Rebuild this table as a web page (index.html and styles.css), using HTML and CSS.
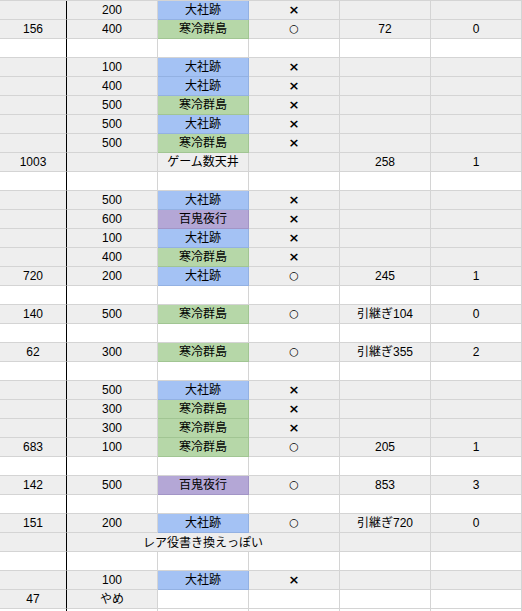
FILE: index.html
```html
<!DOCTYPE html>
<html lang="ja">
<head>
<meta charset="utf-8">
<title>sheet</title>
<link rel="stylesheet" href="styles.css">
</head>
<body>
<div class="sheet">
  <div class="c a">&nbsp;</div><div class="c">200</div><div class="c blue">大社跡</div><div class="c x">×</div><div class="c"></div><div class="c"></div>
  <div class="c a">156</div><div class="c">400</div><div class="c green">寒冷群島</div><div class="c o">○</div><div class="c">72</div><div class="c">0</div>
  <div class="c a w"></div><div class="c w"></div><div class="c w"></div><div class="c w"></div><div class="c w"></div><div class="c w"></div>
  <div class="c a"></div><div class="c">100</div><div class="c blue">大社跡</div><div class="c x">×</div><div class="c"></div><div class="c"></div>
  <div class="c a"></div><div class="c">400</div><div class="c blue">大社跡</div><div class="c x">×</div><div class="c"></div><div class="c"></div>
  <div class="c a"></div><div class="c">500</div><div class="c green">寒冷群島</div><div class="c x">×</div><div class="c"></div><div class="c"></div>
  <div class="c a"></div><div class="c">500</div><div class="c blue">大社跡</div><div class="c x">×</div><div class="c"></div><div class="c"></div>
  <div class="c a"></div><div class="c">500</div><div class="c green">寒冷群島</div><div class="c x">×</div><div class="c"></div><div class="c"></div>
  <div class="c a">1003</div><div class="c"></div><div class="c">ゲーム数天井</div><div class="c"></div><div class="c">258</div><div class="c">1</div>
  <div class="c a w"></div><div class="c w"></div><div class="c w"></div><div class="c w"></div><div class="c w"></div><div class="c w"></div>
  <div class="c a"></div><div class="c">500</div><div class="c blue">大社跡</div><div class="c x">×</div><div class="c"></div><div class="c"></div>
  <div class="c a"></div><div class="c">600</div><div class="c purple">百鬼夜行</div><div class="c x">×</div><div class="c"></div><div class="c"></div>
  <div class="c a"></div><div class="c">100</div><div class="c blue">大社跡</div><div class="c x">×</div><div class="c"></div><div class="c"></div>
  <div class="c a"></div><div class="c">400</div><div class="c green">寒冷群島</div><div class="c x">×</div><div class="c"></div><div class="c"></div>
  <div class="c a">720</div><div class="c">200</div><div class="c blue">大社跡</div><div class="c o">○</div><div class="c">245</div><div class="c">1</div>
  <div class="c a w"></div><div class="c w"></div><div class="c w"></div><div class="c w"></div><div class="c w"></div><div class="c w"></div>
  <div class="c a">140</div><div class="c">500</div><div class="c green">寒冷群島</div><div class="c o">○</div><div class="c">引継ぎ104</div><div class="c">0</div>
  <div class="c a w"></div><div class="c w"></div><div class="c w"></div><div class="c w"></div><div class="c w"></div><div class="c w"></div>
  <div class="c a">62</div><div class="c">300</div><div class="c green">寒冷群島</div><div class="c o">○</div><div class="c">引継ぎ355</div><div class="c">2</div>
  <div class="c a w"></div><div class="c w"></div><div class="c w"></div><div class="c w"></div><div class="c w"></div><div class="c w"></div>
  <div class="c a"></div><div class="c">500</div><div class="c blue">大社跡</div><div class="c x">×</div><div class="c"></div><div class="c"></div>
  <div class="c a"></div><div class="c">300</div><div class="c green">寒冷群島</div><div class="c x">×</div><div class="c"></div><div class="c"></div>
  <div class="c a"></div><div class="c">300</div><div class="c green">寒冷群島</div><div class="c x">×</div><div class="c"></div><div class="c"></div>
  <div class="c a">683</div><div class="c">100</div><div class="c green">寒冷群島</div><div class="c o">○</div><div class="c">205</div><div class="c">1</div>
  <div class="c a w"></div><div class="c w"></div><div class="c w"></div><div class="c w"></div><div class="c w"></div><div class="c w"></div>
  <div class="c a">142</div><div class="c">500</div><div class="c purple">百鬼夜行</div><div class="c o">○</div><div class="c">853</div><div class="c">3</div>
  <div class="c a w"></div><div class="c w"></div><div class="c w"></div><div class="c w"></div><div class="c w"></div><div class="c w"></div>
  <div class="c a">151</div><div class="c">200</div><div class="c blue">大社跡</div><div class="c o">○</div><div class="c">引継ぎ720</div><div class="c">0</div>
  <div class="c a"></div><div class="c span3">レア役書き換えっぽい</div><div class="c"></div><div class="c"></div>
  <div class="c a w"></div><div class="c w"></div><div class="c w"></div><div class="c w"></div><div class="c w"></div><div class="c w"></div>
  <div class="c a"></div><div class="c">100</div><div class="c blue">大社跡</div><div class="c x">×</div><div class="c"></div><div class="c"></div>
  <div class="c a">47</div><div class="c">やめ</div><div class="c w"></div><div class="c w"></div><div class="c w"></div><div class="c w"></div>
  <div class="c a w"></div><div class="c w"></div><div class="c w"></div><div class="c w"></div><div class="c w"></div><div class="c w"></div>
</div>
</body>
</html>
```

FILE: styles.css
```css
html, body {
  margin: 0;
  padding: 0;
  background: #ffffff;
}
body {
  width: 522px;
  height: 611px;
  overflow: hidden;
  font-family: "Liberation Sans", "Noto Sans CJK JP", sans-serif;
  font-size: 12px;
  color: #000000;
  -webkit-font-smoothing: antialiased;
}
.sheet {
  display: grid;
  grid-template-columns: 67px repeat(5, 91px);
  grid-auto-rows: 19px;
  border-top: 1px solid #d4d4d4;
}
.c {
  box-sizing: border-box;
  background: #eeeeee;
  border-right: 1px solid #d4d4d4;
  border-bottom: 1px solid #d4d4d4;
  line-height: 18px;
  text-align: center;
  white-space: nowrap;
  overflow: visible;
}
.c.a {
  border-right: 1px solid #000000;
}
.c.w {
  background: #ffffff;
}
.c.blue {
  background: #a4c2f4;
  border-right-color: #93b1e2;
  border-bottom-color: #93b1e2;
}
.c.green {
  background: #b6d7a8;
  border-right-color: #a1c593;
  border-bottom-color: #a1c593;
}
.c.purple {
  background: #b4a7d6;
  border-right-color: #a295c6;
  border-bottom-color: #a295c6;
}
.c.x {
  font-family: "DejaVu Sans", sans-serif;
  font-size: 13px;
  font-weight: bold;
}
.c.o {
  font-family: "DejaVu Sans", sans-serif;
  font-size: 11px;
}
.c.span3 {
  grid-column: span 3;
  font-family: "Noto Sans CJK JP", sans-serif;
}
```
